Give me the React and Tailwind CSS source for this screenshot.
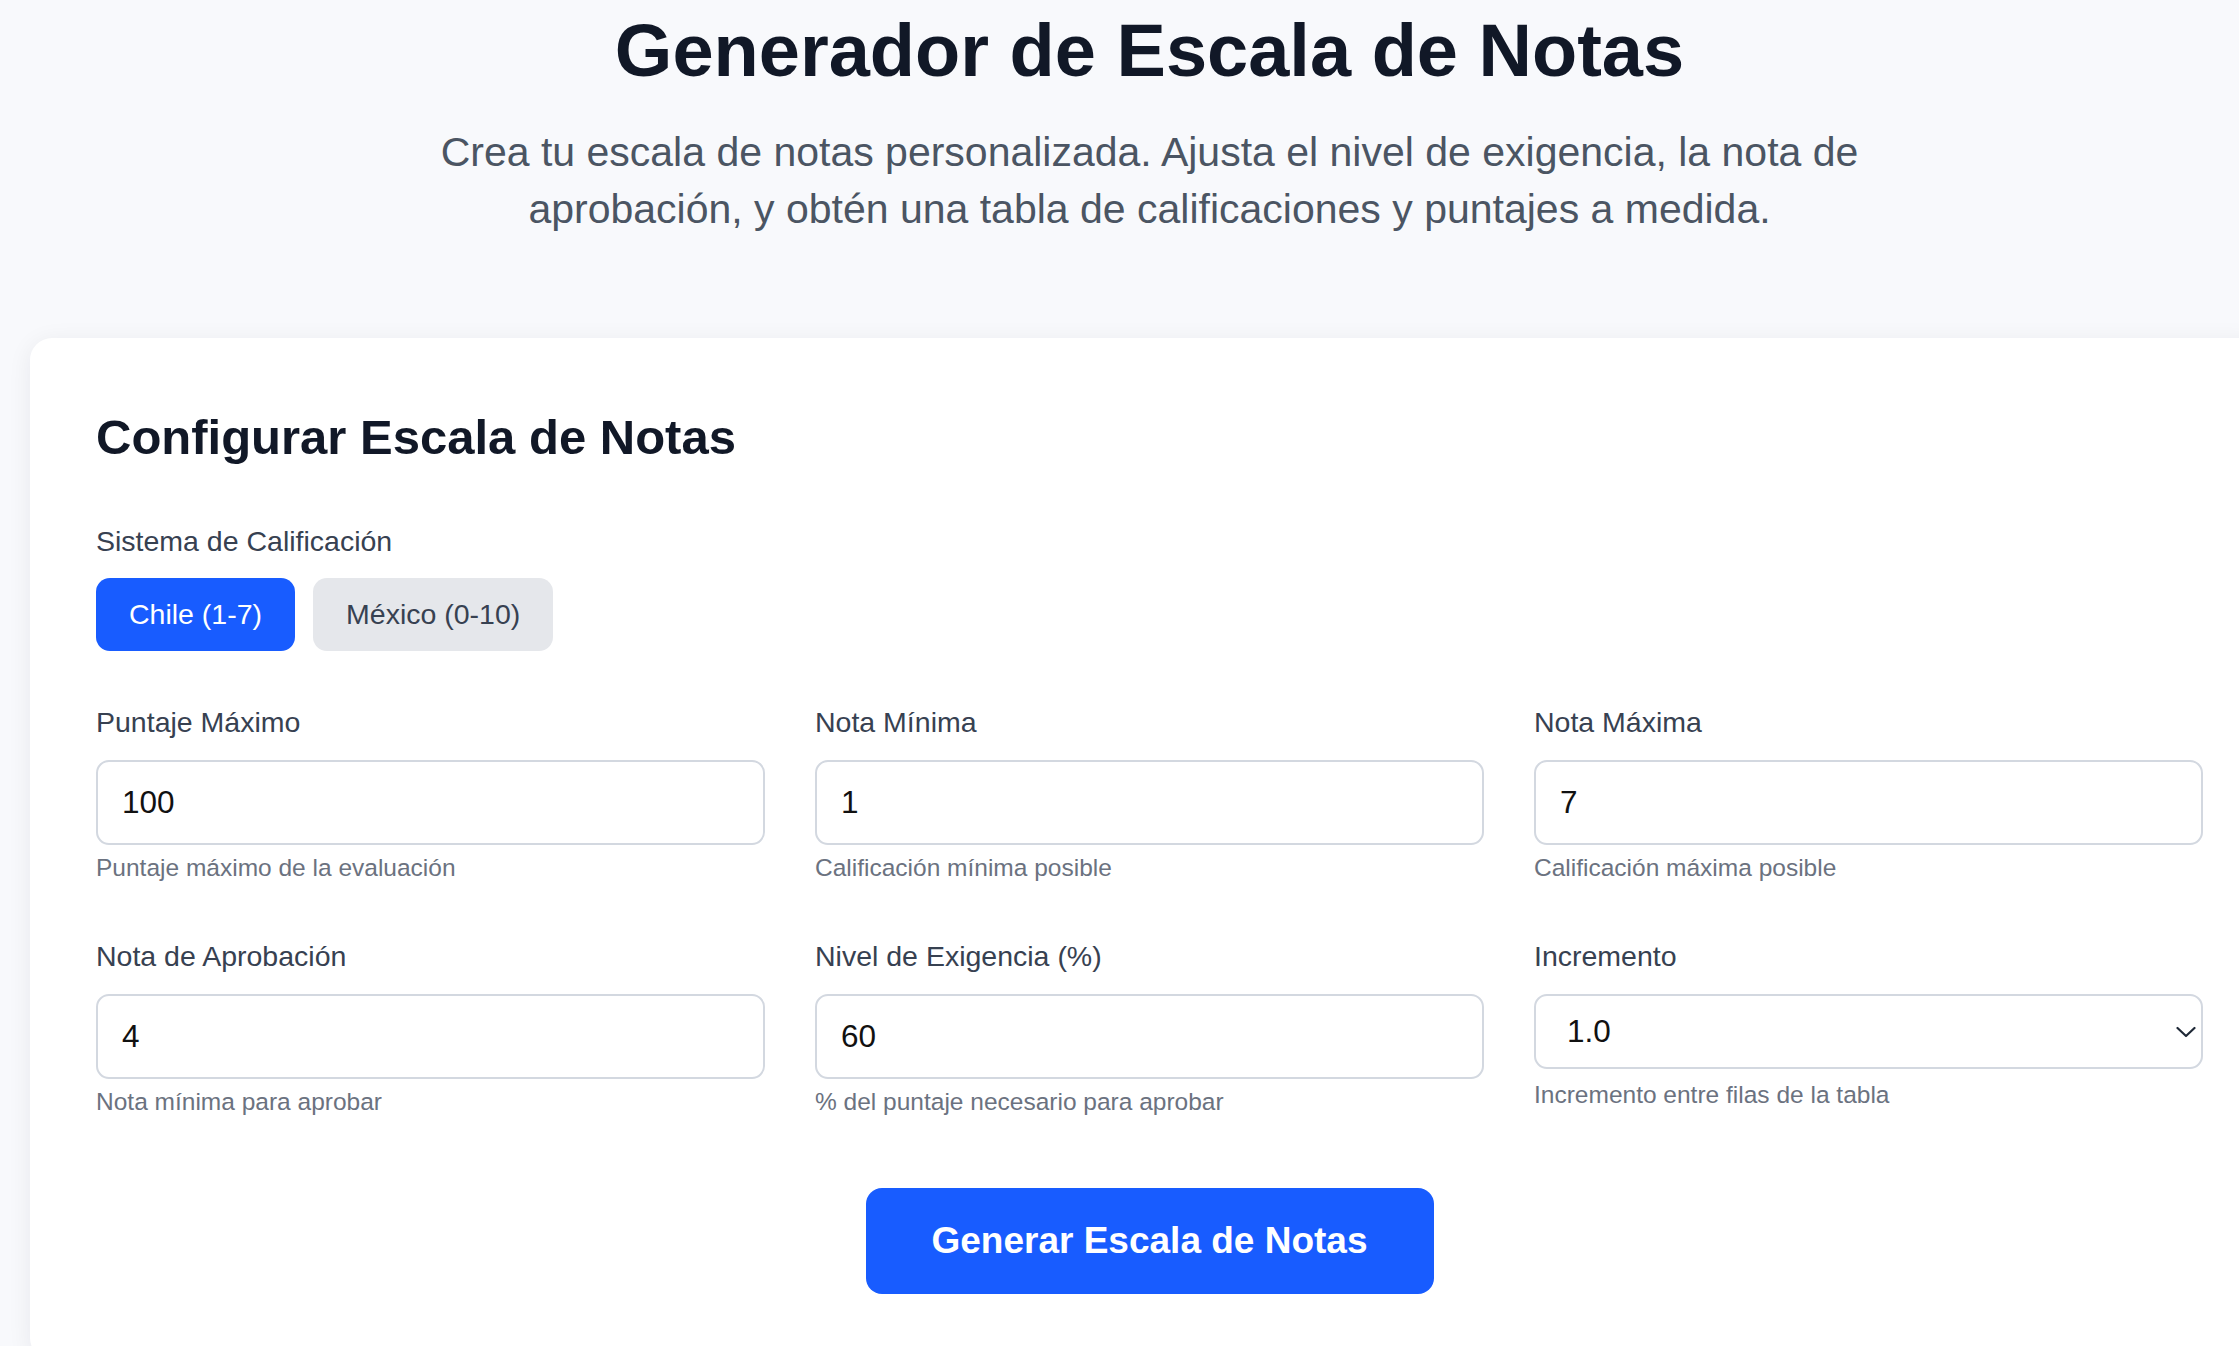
import { useState } from "react";

const sistemas = [
  { id: "chile", label: "Chile (1-7)" },
  { id: "mexico", label: "México (0-10)" },
];

const Field = ({ label, help, value, onChange }) => (
  <div>
    <label className="block text-[28.5px] leading-[43px] text-[#374151]">
      {label}
    </label>
    <input
      type="text"
      value={value}
      onChange={(e) => onChange(e.target.value)}
      className="mt-[16px] block w-full h-[85px] px-6 border-2 border-[#d3d8e0] rounded-[13px] bg-white text-[31.5px] text-[#111111] outline-none"
    />
    <p className="mt-[4px] text-[24.5px] leading-[37px] text-[#6b7280]">{help}</p>
  </div>
);

const App = () => {
  const [sistema, setSistema] = useState("chile");
  const [formData, setFormData] = useState({
    puntajeMax: "100",
    notaMin: "1",
    notaMax: "7",
    notaAprob: "4",
    exigencia: "60",
    incremento: "1.0",
  });

  const set = (key) => (val) => setFormData({ ...formData, [key]: val });

  return (
    <div className="min-h-screen overflow-hidden bg-[#f8f9fc] font-['Liberation_Sans',Arial,sans-serif]">
      <div className="w-[2239px] ml-[30px]">
        {/* Header */}
        <div className="pt-[6px] text-center">
          <h1 className="text-[74px] leading-[89px] font-bold text-[#111827]">
            Generador de Escala de Notas
          </h1>
          <p className="mt-[29px] mx-auto max-w-[1500px] text-[41px] leading-[57px] text-[#4b5563]">
            Crea tu escala de notas personalizada. Ajusta el nivel de exigencia,
            la nota de aprobación, y obtén una tabla de calificaciones y
            puntajes a medida.
          </p>
        </div>

        {/* Config card */}
        <div className="mt-[100px] bg-white rounded-[22px] shadow-[0_4px_24px_rgba(15,23,42,0.07)] px-[66px] pt-[70px] pb-[66px]">
          <h2 className="text-[49px] leading-[59px] font-bold text-[#111827]">
            Configurar Escala de Notas
          </h2>

          <div className="mt-[53px]">
            <span className="block text-[28.5px] leading-[43px] text-[#374151]">
              Sistema de Calificación
            </span>
            <div className="mt-[15px] flex gap-[18px]">
              {sistemas.map((s) => (
                <button
                  key={s.id}
                  onClick={() => setSistema(s.id)}
                  className={`h-[73px] px-[33px] rounded-[14px] text-[28.5px] ${
                    sistema === s.id
                      ? "bg-[#185cff] text-white"
                      : "bg-[#e5e7eb] text-[#374151]"
                  }`}
                >
                  {s.label}
                </button>
              ))}
            </div>
          </div>

          <div className="mt-[50px] grid grid-cols-3 gap-x-[50px] gap-y-[49px] items-start">
            <Field
              label="Puntaje Máximo"
              help="Puntaje máximo de la evaluación"
              value={formData.puntajeMax}
              onChange={set("puntajeMax")}
            />
            <Field
              label="Nota Mínima"
              help="Calificación mínima posible"
              value={formData.notaMin}
              onChange={set("notaMin")}
            />
            <Field
              label="Nota Máxima"
              help="Calificación máxima posible"
              value={formData.notaMax}
              onChange={set("notaMax")}
            />
            <Field
              label="Nota de Aprobación"
              help="Nota mínima para aprobar"
              value={formData.notaAprob}
              onChange={set("notaAprob")}
            />
            <Field
              label="Nivel de Exigencia (%)"
              help="% del puntaje necesario para aprobar"
              value={formData.exigencia}
              onChange={set("exigencia")}
            />
            <div>
              <label className="block text-[28.5px] leading-[43px] text-[#374151]">
                Incremento
              </label>
              <div className="relative mt-[16px]">
                <select
                  value={formData.incremento}
                  onChange={(e) => set("incremento")(e.target.value)}
                  className="block w-full h-[75px] appearance-none pl-[31px] pr-10 border-2 border-[#d3d8e0] rounded-[13px] bg-white text-[31.5px] text-[#111111] outline-none"
                >
                  <option value="0.1">0.1</option>
                  <option value="0.5">0.5</option>
                  <option value="1.0">1.0</option>
                </select>
                <svg
                  className="pointer-events-none absolute right-[7px] top-1/2 -translate-y-1/2"
                  width="20"
                  height="11"
                  viewBox="0 0 20 11"
                  fill="none"
                >
                  <path
                    d="M1.5 1.5L10 9.5L18.5 1.5"
                    stroke="#1f2937"
                    strokeWidth="2.2"
                    strokeLinecap="round"
                    strokeLinejoin="round"
                  />
                </svg>
              </div>
              <p className="mt-[7px] text-[24.5px] leading-[37px] text-[#6b7280]">
                Incremento entre filas de la tabla
              </p>
            </div>
          </div>

          <div className="mt-[68px] flex justify-center">
            <button className="h-[106px] px-[66px] rounded-[16px] bg-[#185cff] text-white text-[37px] font-bold">
              Generar Escala de Notas
            </button>
          </div>
        </div>
      </div>
    </div>
  );
};

export default App;
